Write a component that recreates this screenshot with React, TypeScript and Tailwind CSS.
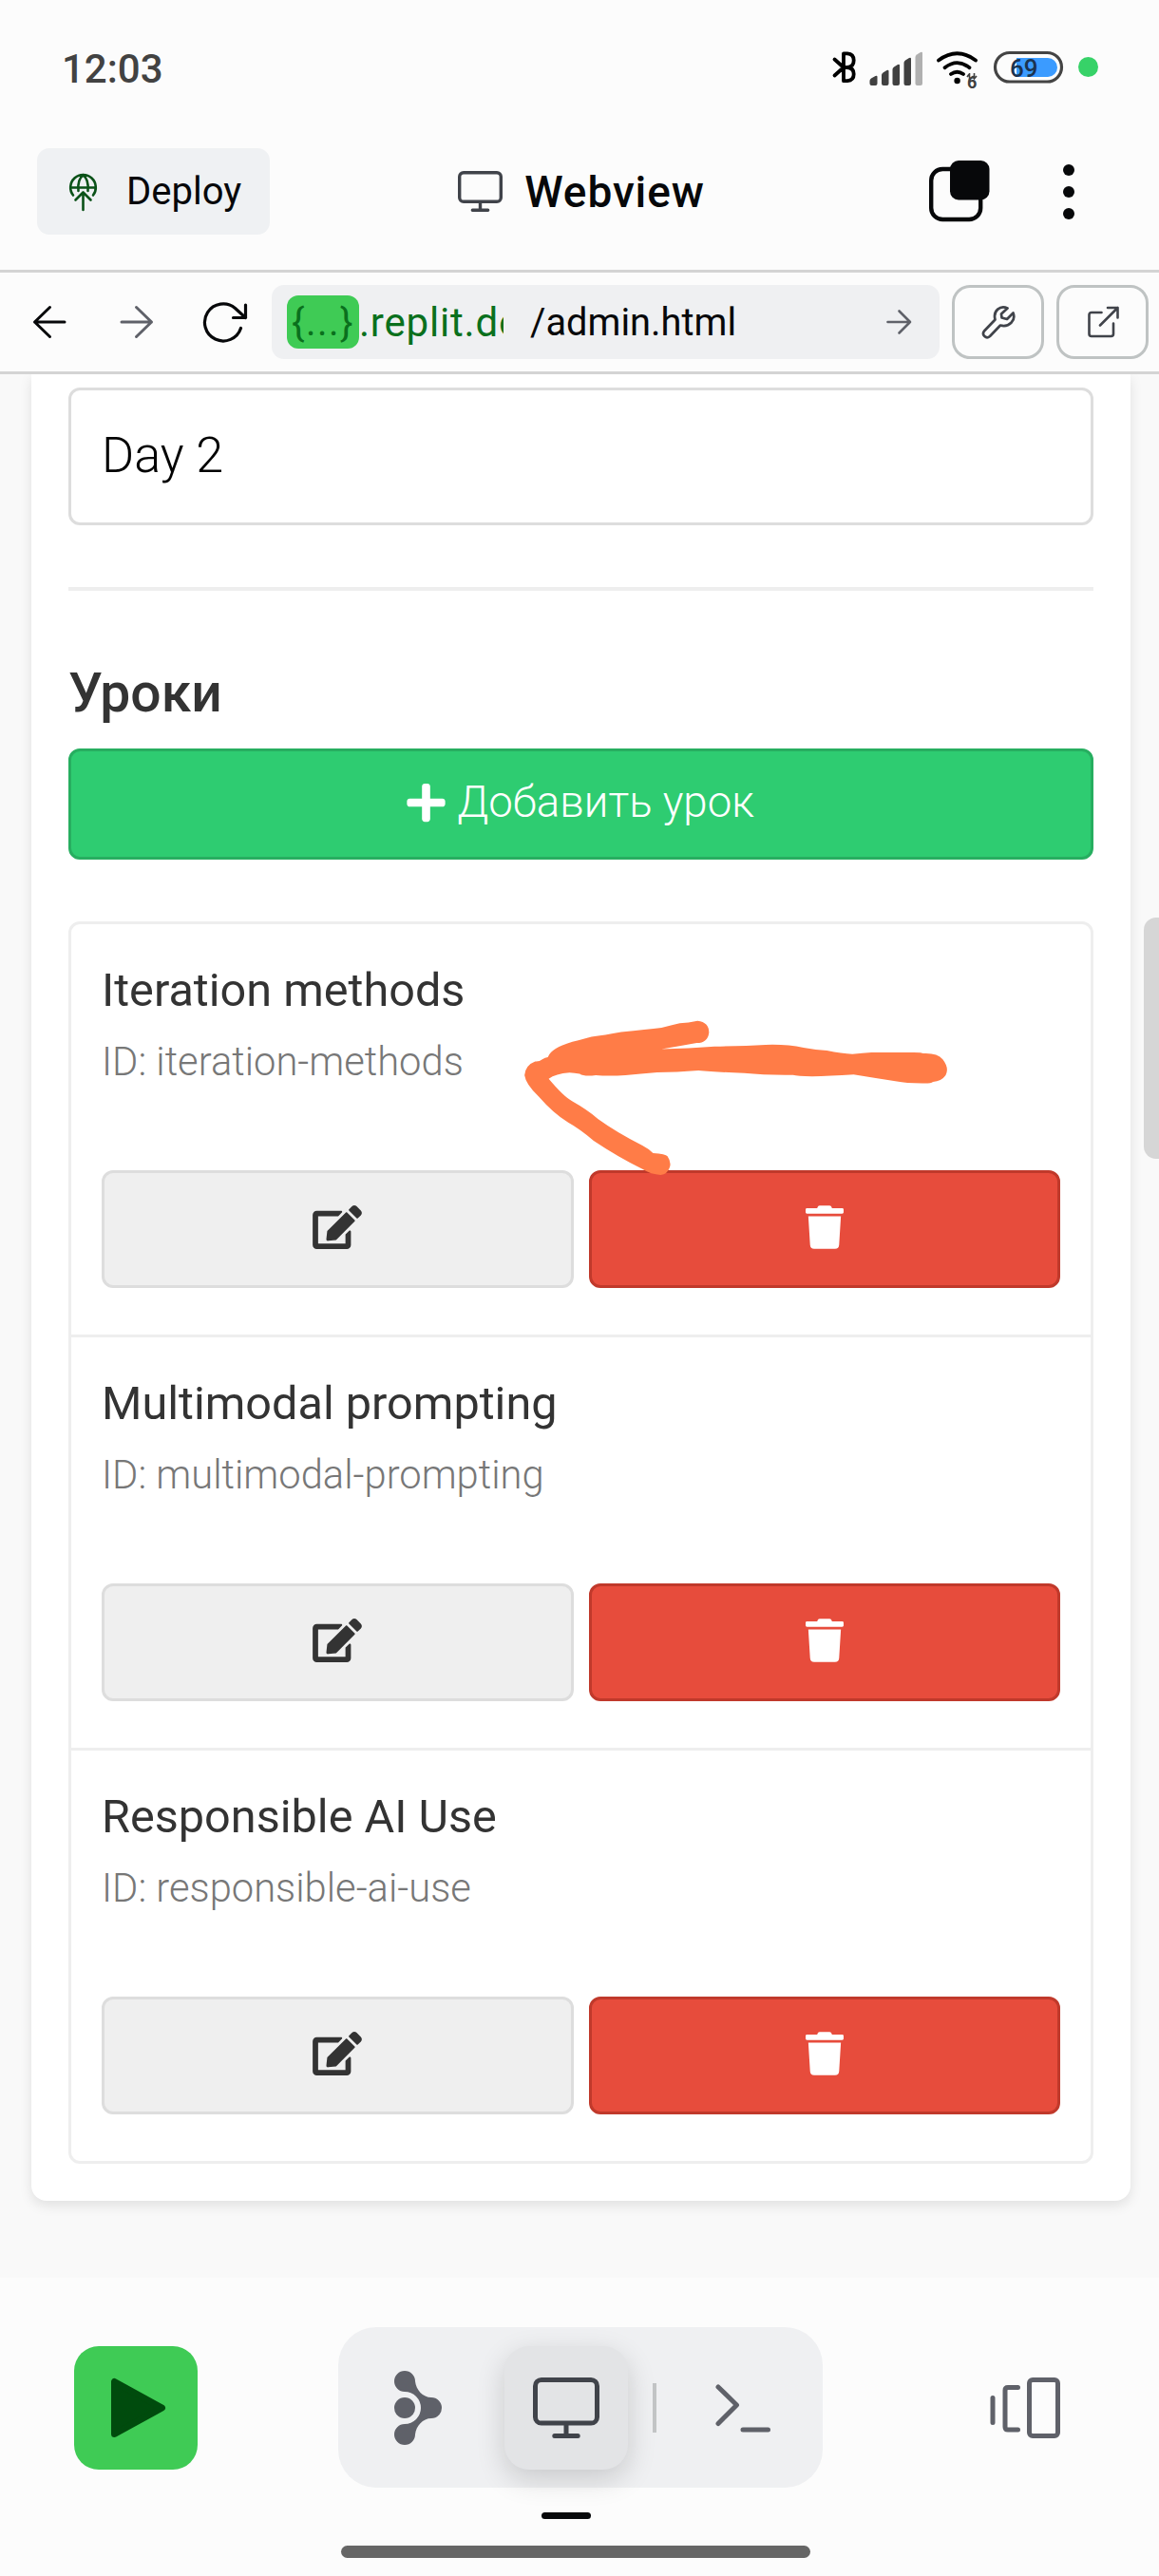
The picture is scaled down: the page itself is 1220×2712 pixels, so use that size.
import React from "react";
import { FaEdit, FaPlus, FaTrash } from "react-icons/fa";

const lessons = [
  { title: "Iteration methods", id: "iteration-methods" },
  { title: "Multimodal prompting", id: "multimodal-prompting" },
  { title: "Responsible AI Use", id: "responsible-ai-use" },
];

function StatusBar() {
  return (
    <div className="flex h-[144px] shrink-0 items-center justify-between pl-[65px] pr-[64px]">
      <span className="pt-[1px] text-[42px] leading-[48px] font-medium text-[#424242]">12:03</span>
      <svg width="284" height="48" viewBox="872 48 284 48">
        <path d="M878.500 62.500L888 71L878.500 79.500M888 56.300V85.200H892Q898.700 84.500 898.700 78Q898.700 71.500 892 71H888H892Q898.700 70.500 898.700 63.500Q898.700 56.800 892 56.300Z" fill="none" stroke="#000" strokeWidth="3.800" strokeLinecap="round" strokeLinejoin="round" />
        <g fill="#404040">
          <path d="M915.500 88Q915.500 90 917.500 90H921.500Q923.500 90 923.500 88V81Q923.500 79 921.500 80L917 82.500Q915.500 83.500 915.500 85ZM928 88Q928 90 930 90H933.500Q935.500 90 935.500 88V75Q935.500 73 933.500 74L929.500 76.500Q928 77.500 928 79ZM939.500 88Q939.500 90 941.500 90H945Q947 90 947 88V69Q947 67 945 68L941 70.500Q939.500 71.500 939.500 73ZM951.500 88Q951.500 90 953.500 90H957Q959 90 959 88V62Q959 60 957 61L953 63.500Q951.500 64.500 951.500 66Z" />
          <path d="M963.500 88Q963.500 90 965.500 90H969Q971 90 971 88V56Q971 54 969 55L965 57.500Q963.500 58.500 963.500 60Z" fill="#b0b0b0" />
        </g>
        <g fill="none" stroke="#000" strokeWidth="3.800" strokeLinecap="round">
          <path d="M988 63.500Q1007.500 49 1027 63.500M994.500 71.200Q1007.500 61 1020.500 71.200M1001 78Q1007.500 73.500 1014 78" />
        </g>
        <circle cx="1007.600" cy="85" r="3.200" fill="#000" />
        <path d="M1020.500 86V77M1018 81L1020.500 77.500M1025.500 77V82M1023.500 80L1025.500 83L1028 80" fill="none" stroke="#404040" strokeWidth="1.600" />
        <text x="1018" y="93" fontSize="18" fontWeight="700" fill="#404040">6</text>
        <rect x="1047.500" y="55.500" width="70" height="30.500" rx="15.250" fill="none" stroke="#444" strokeWidth="3.200" />
        <path d="M1070 61h33a10 10 0 0 1 0 20h-33z" fill="#3b9bff" />
        <text x="1063" y="80.500" fontSize="26" fontWeight="500" fill="#1b3350">69</text>
        <circle cx="1145.500" cy="70.500" r="10.500" fill="#37d268" />
      </svg>
    </div>
  );
}

function Monitor({ w, h, s }: { w: number; h: number; s: number }) {
  return (
    <svg width={w} height={h} viewBox={`0 0 ${w} ${h}`} fill="none" stroke="#40434a" strokeWidth={s} strokeLinecap="round">
      <rect x={s / 2} y={s / 2} width={w - s} height={h * 0.79 - s} rx={h * 0.1} />
      <path d={`M${w / 2} ${h * 0.79}V${h - s / 2}M${w * 0.29 + s / 2} ${h - s / 2}H${w * 0.71 - s / 2}`} />
    </svg>
  );
}

function Header() {
  return (
    <div className="grid h-[140px] shrink-0 grid-cols-[245px_1fr_245px] items-start px-[39px] pt-[12px]">
      <div className="flex h-[91px] w-[245px] items-center rounded-[13px] bg-[#eff1f3] pl-[33px]">
        <svg width="31" height="42" viewBox="0 0 31 42" fill="none" stroke="#0b5218" strokeWidth="2.600" strokeLinecap="round" strokeLinejoin="round">
          <path d="M5 24.500A13.300 13.300 0 1 1 26 24.500M2.200 16.500H28.800M10.500 20C9.500 11 12 6 15.500 3.200C19 6 21.500 11 20.500 20M15.500 40V21.500M7.500 29.500L15.500 21.500L23.500 29.500" />
        </svg>
        <span className="ml-[30px] text-[40px] leading-[48px] text-[#07080a]">Deploy</span>
      </div>
      <div className="flex h-[91px] items-center justify-center gap-[23px] pl-[4px]">
        <Monitor w={47} h={43} s={3.4} />
        <span className="pt-[1px] text-[46px] leading-[52px] font-medium tracking-[0.900px] text-[#07080a]">Webview</span>
      </div>
      <div className="flex h-[91px] items-center justify-end">
        <svg width="64" height="65" viewBox="0 0 64 65">
          <rect x="2.200" y="9" width="52" height="53" rx="12" fill="none" stroke="#07080a" strokeWidth="4.400" />
          <rect x="22" y="0" width="41.500" height="41.500" rx="9" fill="#07080a" />
        </svg>
        <svg width="12" height="60" viewBox="0 0 12 60" className="mr-[50px] ml-[77px]" fill="#07080a">
          <circle cx="6" cy="7" r="6" />
          <circle cx="6" cy="30" r="6" />
          <circle cx="6" cy="53" r="6" />
        </svg>
      </div>
    </div>
  );
}

function Toolbar() {
  return (
    <div className="flex h-[110px] shrink-0 items-center border-y-[3px] border-[#d4d4d4] pl-[34px]">
      <svg width="36" height="36" viewBox="0 0 36 36" fill="none" stroke="#07080a" strokeWidth="3" strokeLinecap="round" strokeLinejoin="round">
        <path d="M34 18H2.500M18.500 2.500L2.500 18L18.500 33.500" />
      </svg>
      <svg className="ml-[56px]" width="36" height="36" viewBox="0 0 36 36" fill="none" stroke="#5f6169" strokeWidth="3" strokeLinecap="round" strokeLinejoin="round">
        <path d="M2 18H33.500M17.500 2.500L33.500 18L17.500 33.500" />
      </svg>
      <svg className="ml-[50px]" width="50" height="46" viewBox="0 0 50 46" fill="none" stroke="#07080a" strokeWidth="3.200" strokeLinecap="round" strokeLinejoin="round">
        <path d="M41.500 29.500A19.500 19.500 0 1 1 35.500 8.500L46.500 18.500M46.500 5V18.500H33.500" />
      </svg>
      <div className="ml-[24px] flex h-[78px] w-[703px] items-center rounded-[13px] bg-[#eff0f2] pl-[16px] pr-[29px] text-[39px] leading-[50px]">
        <div className="flex w-[228px] items-center overflow-hidden text-[#0a701d]">
          <span className="flex h-[56px] w-[76px] shrink-0 items-center justify-center rounded-[12px] bg-[#3fcb55] pt-[2px] text-[40px] tracking-[1.500px]">{"{...}"}</span>
          <span className="pt-[2px] text-[42px] tracking-[0.800px]">.replit.dev</span>
        </div>
        <span className="ml-[28px] flex-1 pt-[1px] text-[39.800px] text-[#07080a]">/admin.html</span>
        <svg width="28" height="28" viewBox="0 0 28 28" fill="none" stroke="#5f6169" strokeWidth="2.600" strokeLinecap="round" strokeLinejoin="round">
          <path d="M2.500 14H26M14.500 2.500L26 14L14.500 25.500" />
        </svg>
      </div>
      <div className="ml-[13px] flex h-[78px] w-[97px] items-center justify-center rounded-[19px] border-[3px] border-[#bfc3c3]">
        <svg width="36" height="36" viewBox="0 0 36 36" fill="none" stroke="#40434a" strokeWidth="2.700" strokeLinejoin="round">
          <path d="M27.500 3.500C20 0 12 6 14.500 15.500L3 27.500C0 31.500 5 36.500 9 33L20 21.500C29.500 24 36.500 16 33.500 8.500L27 15L21.500 13.500L21 9.500Z" />
        </svg>
      </div>
      <div className="ml-[13px] flex h-[78px] w-[97px] items-center justify-center rounded-[19px] border-[3px] border-[#bfc3c3]">
        <svg width="34" height="34" viewBox="0 0 34 34" fill="none" stroke="#40434a" strokeWidth="2.600" strokeLinecap="round" strokeLinejoin="round">
          <path d="M15.500 7H5Q2.500 7 2.500 9.500V29.500Q2.500 32 5 32H25.500Q28 32 28 29.500V18.500M22 2H32.500V12.500M32.500 2L14 20.500" />
        </svg>
      </div>
    </div>
  );
}

function Lesson({ title, id }: { title: string; id: string }) {
  return (
    <div className="flex h-[435px] flex-col border-b-[3px] border-[#eee] px-[32px] pt-[38px] last:h-[432px] last:border-b-0">
      <div className="h-[64px] text-[48.600px] leading-[64px] text-[#333]">{title}</div>
      <div className="mt-[15px] h-[56px] text-[41.700px] leading-[56px] font-light text-[#777]">ID: {id}</div>
      <div className="mt-[86px] grid h-[124px] grid-cols-2 gap-[16px]">
        <button className="flex items-center justify-center rounded-[12px] border-[3px] border-[#ddd] bg-[#efefef] pb-[4px] text-[#333]">
          <FaEdit className="h-[46px] w-[52px]" />
        </button>
        <button className="flex items-center justify-center rounded-[12px] border-[3px] border-[#c0392b] bg-[#e74c3c] pb-[4px] text-white">
          <FaTrash className="h-[46px] w-[40px]" />
        </button>
      </div>
    </div>
  );
}

function HandDrawnArrow() {
  return (
    <svg className="absolute top-[1070px] left-[545px]" width="460" height="175" viewBox="545 1070 460 175">
      <g transform="translate(520 780) scale(0.44643 0.38265)" fill="#ff7c47">
        <path d="M127 870Q135 845 185 828Q215 819 230 814Q260 810 300 801Q360 794 395 789Q420 782 438 777Q458 776 480 770Q507 774 507 802Q504 831 478 831Q440 839 395 848Q460 847 520 841Q590 839 640 836Q690 834 730 844Q760 850 785 852Q820 860 845 862Q870 859 890 857H990Q1010 857 1012 860Q1045 858 1058 876Q1074 900 1065 920Q1055 937 1035 938Q1030 943 1010 942Q970 942 950 937Q900 928 848 918Q790 922 750 923Q715 922 705 919Q640 920 590 914Q520 911 482 907Q430 912 385 912Q345 916 310 920Q270 923 240 920Q212 924 202 916Q190 914 178 913Q145 916 129 930Q165 980 185 992Q220 1015 245 1040Q290 1078 350 1113Q365 1122 375 1134Q405 1136 409 1143Q419 1160 414 1174Q409 1192 393 1194Q370 1193 350 1178Q290 1143 235 1100Q200 1066 175 1050Q140 1025 105 978Q75 945 72 920Q74 892 97 882Q107 883 114 876Q120 871 127 870Z" />
      </g>
    </svg>
  );
}

function Content() {
  return (
    <div className="h-[2004px] shrink-0 overflow-hidden bg-[#f9f9f9]">
      <div className="ml-[33px] h-[1923px] w-[1157px] rounded-b-[16px] bg-white px-[39px] pt-[14px] shadow-[0_5px_13px_rgba(0,0,0,0.1)]">
        <div className="flex h-[145px] items-center rounded-[12px] border-[3px] border-[#ddd] px-[32px] pb-[1px] text-[52.200px] leading-[60px] font-light text-black">Day 2</div>
        <div className="mt-[65px] h-[4px] bg-[#eee]" />
        <h3 className="mt-[74px] h-[68px] text-[57px] leading-[68px] font-medium text-[#333]">Уроки</h3>
        <button className="mt-[24px] flex h-[117px] w-full items-center justify-center gap-[12px] rounded-[12px] border-[3px] border-[#27ae60] bg-[#2ecc71] pr-[1px] pb-[3px] text-[45.600px] font-light text-white">
          <FaPlus className="h-[46px] w-[41px]" />
          <span>Добавить урок</span>
        </button>
        <div className="mt-[65px] rounded-[12px] border-[3px] border-[#eee]">
          {lessons.map((l) => (
            <Lesson key={l.id} title={l.title} id={l.id} />
          ))}
        </div>
      </div>
    </div>
  );
}

function BottomNav() {
  return (
    <div className="flex flex-1 flex-col">
      <div className="mt-[52px] flex h-[169px] items-center pl-[78px]">
        <div className="flex h-[130px] w-[130px] items-center rounded-[26px] bg-[#3fcb55] pl-[39px]">
          <svg width="58" height="64" viewBox="0 0 58 64">
            <path d="M3.500 4.500V59.500L53.500 32Z" fill="#004b0d" stroke="#004b0d" strokeWidth="7" strokeLinejoin="round" />
          </svg>
        </div>
        <div className="ml-[148px] flex h-[169px] w-[510px] items-center rounded-[40px] bg-[#eff0f2]">
          <svg className="ml-[59px]" width="50" height="78" viewBox="0 0 50 78" fill="#5f6169">
            <circle cx="11" cy="39" r="11" />
            <path d="M11 0A11 11 0 0 1 22 11C23 20 30 28 39 28A11 11 0 0 1 39 50C30 50 23 58 22 67A11 11 0 1 1 11 56A17 17 0 0 0 11 22A11 11 0 0 1 11 0Z" />
          </svg>
          <div className="ml-[66px] flex h-[130px] w-[130px] items-center justify-center rounded-[26px] bg-[#e3e4e6] shadow-[0_10px_30px_rgba(0,0,0,0.16)]">
            <Monitor w={70} h={64} s={5} />
          </div>
          <div className="ml-[26px] h-[52px] w-[4px] bg-[#c2c4c5]" />
          <svg className="ml-[62px]" width="59" height="52" viewBox="0 0 59 52" fill="none" stroke="#5f6169" strokeWidth="5" strokeLinecap="round" strokeLinejoin="round">
            <path d="M3 4L22.500 23L3 42.500M29 49H55.500" />
          </svg>
        </div>
        <svg className="ml-[176px]" width="75" height="64" viewBox="0 0 75 64" fill="none" stroke="#5f6169" strokeWidth="5" strokeLinecap="round" strokeLinejoin="round">
          <path d="M3 21.500V47.500M29.500 10.500H19Q16 10.500 16 13.500V52Q16 55 19 55H29.500" />
          <rect x="41.500" y="2.500" width="30" height="59" rx="3.500" />
        </svg>
      </div>
      <div className="mt-[26px] ml-[570px] h-[7px] w-[52px] rounded-full bg-[#07080a]" />
      <div className="mt-[28px] ml-[359px] h-[13px] w-[494px] rounded-full bg-[#666]" />
    </div>
  );
}

export default function App() {
  return (
    <div className="relative flex h-[2712px] w-[1220px] flex-col overflow-hidden bg-[#fcfcfc] font-['Roboto',sans-serif]">
      <StatusBar />
      <Header />
      <Toolbar />
      <Content />
      <BottomNav />
      <div className="absolute top-[966px] right-0 h-[254px] w-[16px] rounded-l-[13px] bg-[#d6d6d6]" />
      <HandDrawnArrow />
    </div>
  );
}
